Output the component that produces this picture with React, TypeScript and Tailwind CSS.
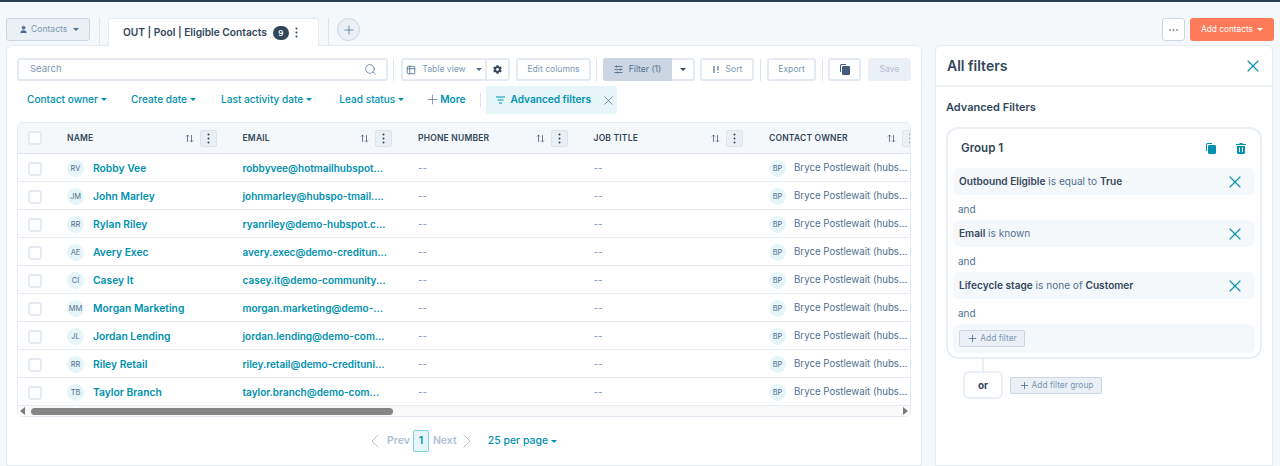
import { ChevronLeft, ChevronRight, Plus, Search, Table2, User, X } from 'lucide-react'
import { FaCog } from 'react-icons/fa'

// Contacts shown in the table
const CONTACTS = [
  { initials: 'RV', name: 'Robby Vee', email: 'robbyvee@hotmailhubspot...' },
  { initials: 'JM', name: 'John Marley', email: 'johnmarley@hubspo-tmail....' },
  { initials: 'RR', name: 'Rylan Riley', email: 'ryanriley@demo-hubspot.c...' },
  { initials: 'AE', name: 'Avery Exec', email: 'avery.exec@demo-creditun...' },
  { initials: 'CI', name: 'Casey It', email: 'casey.it@demo-community...' },
  { initials: 'MM', name: 'Morgan Marketing', email: 'morgan.marketing@demo-...' },
  { initials: 'JL', name: 'Jordan Lending', email: 'jordan.lending@demo-com...' },
  { initials: 'RR', name: 'Riley Retail', email: 'riley.retail@demo-credituni...' },
  { initials: 'TB', name: 'Taylor Branch', email: 'taylor.branch@demo-com...' }
]

const COLUMNS = ['NAME', 'EMAIL', 'PHONE NUMBER', 'JOB TITLE', 'CONTACT OWNER']

function Caret({ className = 'border-t-[#0091ae]' }: { className?: string }) {
  return <span className={`inline-block w-0 h-0 border-x-[3px] border-x-transparent border-t-[3px] ${className}`} />
}

function Separator({ className = 'h-[22px]' }: { className?: string }) {
  return <div className={`w-px bg-[#dfe3eb] shrink-0 ${className}`} />
}

function ToolButton({ children, className = '' }: { children: React.ReactNode; className?: string }) {
  return (
    <div className={`h-[23px] flex items-center justify-center gap-1.5 bg-white border-2 border-[#e5ebf2] rounded-[3px] text-[8.6px] text-[#7c98b6] shrink-0 ${className}`}>
      {children}
    </div>
  )
}

function SortArrows() {
  return (
    <svg width="9" height="9" viewBox="0 0 9 9" className="text-[#516f90]" fill="none" stroke="currentColor" strokeWidth="0.9">
      <path d="M2.5 8V1M1 2.5L2.5 1L4 2.5" />
      <path d="M6.5 1v7M5 6.5L6.5 8L8 6.5" />
    </svg>
  )
}

function Dots({ className = 'text-[#33475b]' }: { className?: string }) {
  return (
    <svg width="3" height="11" viewBox="0 0 3 11" fill="currentColor" className={className}>
      <circle cx="1.5" cy="1.5" r="1" />
      <circle cx="1.5" cy="5.5" r="1" />
      <circle cx="1.5" cy="9.5" r="1" />
    </svg>
  )
}

function Checkbox() {
  return <div className="w-[14px] h-[14px] bg-white border-2 border-[#e5ebf2] rounded-[3px] shrink-0" />
}

function Avatar({ initials }: { initials: string }) {
  return (
    <div className="w-[17px] h-[17px] rounded-full bg-[#e5f5f8] flex items-center justify-center text-[7.5px] font-normal text-[#516f90] shrink-0">
      {initials}
    </div>
  )
}

function CopyIcon({ className }: { className: string }) {
  return (
    <svg width="10" height="11" viewBox="0 0 10 11" fill="currentColor" className={className}>
      <path d="M0 1.5A1.5 1.5 0 0 1 1.5 0H6v1H1.5a.5.5 0 0 0-.5.5V8H0V1.5z" />
      <rect x="2" y="2" width="8" height="9" rx="1.2" />
    </svg>
  )
}

function TrashIcon() {
  return (
    <svg width="10" height="11" viewBox="0 0 10 11" fill="currentColor">
      <path d="M3.5 0h3v1H10v1H0V1h3.5V0z" />
      <path fillRule="evenodd" d="M1 3h8v6.5A1.5 1.5 0 0 1 7.500 11h-5A1.500 1.500 0 0 1 1 9.500V3zm2 1.500v4.500h1V4.500H3zm3 0v4.500h1V4.500H6z" />
    </svg>
  )
}

function FilterRule({ children }: { children: React.ReactNode }) {
  return (
    <div className="h-[27px] flex items-center justify-between bg-[#f5f8fa] rounded-md pl-[6px] pr-[10px] text-[10.1px] text-[#516f90]">
      <span>{children}</span>
      <X className="w-[20px] h-[20px] text-[#0091ae]" strokeWidth={1.3} />
    </div>
  )
}

function AndLabel() {
  return <div className="h-[25px] pt-[4px] flex items-center pl-[5px] text-[10px] text-[#516f90]">and</div>
}

function AddButton({ label }: { label: string }) {
  return (
    <div className="h-[17px] flex items-center justify-center gap-[2px] bg-[#eaf0f6] border border-[#cbd6e2] rounded-[2px] text-[8.4px] text-[#7c98b6]">
      <Plus className="w-[11px] h-[11px] text-[#516f90]" strokeWidth={1.8} />
      {label}
    </div>
  )
}

export default function App() {
  return (
    <div className="w-[1280px] h-[466px] overflow-hidden bg-[#f5f8fa] font-['Inter',sans-serif] text-[#33475b] border-t-2 border-[#2d3e50]">
      {/* Tab row */}
      <div className="h-[44px] pt-4 flex">
        <div className="ml-[6px] w-[84px] h-[23px] flex items-center pl-[12px] bg-[#eaf0f6] border border-[#cbd6e2] rounded-[3px] text-[8.6px] text-[#7c98b6]">
          <User className="w-[9px] h-[9px] text-[#516f90] fill-[#516f90]" />
          <span className="ml-[3px]">Contacts</span>
          <Caret className="ml-[6px] border-t-[#516f90]" />
        </div>
        <Separator className="ml-[9px] h-[28px]" />
        <div className="ml-[8px] w-[211px] h-[28px] flex items-center pl-[14px] bg-white border border-[#e5ebf2] border-b-0 rounded-t-[3px] relative z-10">
          <span className="text-[10.2px] font-semibold whitespace-nowrap">OUT | Pool | Eligible Contacts</span>
          <span className="ml-[6px] w-4 h-[14px] rounded-full bg-[#33475b] text-white text-[8px] font-semibold flex items-center justify-center">9</span>
          <Dots className="ml-[6px] text-[#33475b]" />
        </div>
        <Separator className="ml-[9px] h-[28px]" />
        <div className="ml-[8px] w-[23px] h-[23px] rounded-full bg-[#eaf0f6] border border-[#cbd6e2] flex items-center justify-center">
          <Plus className="w-[14px] h-[14px] text-[#516f90]" strokeWidth={1.3} />
        </div>
        <div className="ml-auto w-[23px] h-[23px] bg-white border border-[#cbd6e2] rounded-[3px] flex items-center justify-center">
          <svg width="9" height="2" viewBox="0 0 9 2" fill="#33475b">
            <circle cx="1" cy="1" r="0.8" />
            <circle cx="4.5" cy="1" r="0.8" />
            <circle cx="8" cy="1" r="0.8" />
          </svg>
        </div>
        <div className="ml-[5px] mr-[6px] w-[84px] h-[23px] flex items-center justify-center gap-1 bg-[#ff7a59] rounded-[3px] text-[8.3px] text-white">
          Add contacts
          <Caret className="border-t-white" />
        </div>
      </div>

      <div className="flex gap-[13px] pl-[6px] pr-[6px] h-[420px]">
        {/* Main panel */}
        <div className="w-[916px] -mt-px bg-white border border-[#e5ebf2] rounded-t-md pl-[10px] pr-[10px] pt-[12px]">
          {/* Toolbar */}
          <div className="flex items-center">
            <div className="w-[371px] h-[23px] flex items-center justify-between bg-white border-2 border-[#e5ebf2] rounded-[3px] pl-[11px] pr-[9px] text-[9.5px] text-[#7c98b6] shrink-0">
              Search
              <Search className="w-[13px] h-[13px] text-[#516f90]" strokeWidth={1.3} />
            </div>
            <Separator className="ml-[5px] h-[22px]" />
            <div className="ml-[7px] w-[109px] h-[23px] flex bg-white border-2 border-[#e5ebf2] rounded-[3px] text-[8.6px] text-[#7c98b6] shrink-0">
              <div className="flex-1 flex items-center justify-center gap-1.5 border-r-2 border-[#e5ebf2]">
                <Table2 className="w-[10px] h-[10px] text-[#516f90]" />
                Table view
                <Caret className="ml-1 border-t-[#516f90]" />
              </div>
              <div className="w-[21px] flex items-center justify-center">
                <FaCog className="w-[9px] h-[9px] text-[#33475b]" />
              </div>
            </div>
            <ToolButton className="ml-[6px] w-[75px]">Edit columns</ToolButton>
            <Separator className="ml-[5px] h-[22px]" />
            <div className="ml-[6px] w-[92px] h-[23px] flex bg-white border-2 border-[#e5ebf2] rounded-[3px] text-[8.6px] shrink-0">
              <div className="w-[69px] -m-[2px] mr-0 bg-[#cbd6e2] flex items-center justify-center gap-1.5 text-[#516f90] rounded-l-[3px]">
                <svg width="9" height="9" viewBox="0 0 9 9" stroke="currentColor" fill="none" strokeWidth="0.9">
                  <path d="M0.500 1.500h8M0.500 4.500h8M0.500 7.500h8M2.500 0.500v2M6.500 3.500v2M3.500 6.500v2" />
                </svg>
                Filter (1)
              </div>
              <div className="flex-1 flex items-center justify-center"><Caret className="border-t-[#33475b]" /></div>
            </div>
            <ToolButton className="ml-[5px] w-[54px]">
              <svg width="8" height="9" viewBox="0 0 8 9" fill="none" stroke="#516f90" strokeWidth="1.2">
                <path d="M2 8V1M6 1v4.500M6 7v1" />
              </svg>
              Sort
            </ToolButton>
            <Separator className="ml-[6px] h-[22px]" />
            <ToolButton className="ml-[6px] w-[49px]">Export</ToolButton>
            <Separator className="ml-[6px] h-[22px]" />
            <ToolButton className="ml-[5px] w-[33px]"><CopyIcon className="text-[#425b76]" /></ToolButton>
            <div className="ml-[7px] w-[43px] h-[23px] flex items-center justify-center bg-[#eaf0f6] rounded-[3px] text-[8.6px] text-[#b0c1d4] shrink-0">Save</div>
          </div>

          {/* Quick filters */}
          <div className="mt-[5px] h-[28px] flex items-center text-[10.1px] font-medium text-[#0091ae] whitespace-nowrap">
            <span className="ml-[10px] flex items-center gap-[3px]">Contact owner <Caret /></span>
            <span className="ml-[24px] flex items-center gap-[3px]">Create date <Caret /></span>
            <span className="ml-[25px] flex items-center gap-[3px]">Last activity date <Caret /></span>
            <span className="ml-[27px] flex items-center gap-[3px]">Lead status <Caret /></span>
            <span className="ml-[21px] flex items-center gap-0 font-semibold">
              <Plus className="w-[15px] h-[15px] text-[#516f90]" strokeWidth={1.1} />
              More
            </span>
            <Separator className="ml-[14px] h-[14px]" />
            <div className="ml-[5px] w-[131px] h-[28px] flex items-center bg-[#e5f5f8] rounded-[2px] pl-[10px] pr-[1px] font-semibold">
              <svg width="9" height="8" viewBox="0 0 9 8" stroke="currentColor" fill="none" strokeWidth="1">
                <path d="M0 1h9M1.500 4h6M3 7h3" />
              </svg>
              <span className="ml-[6px]">Advanced filters</span>
              <X className="ml-auto w-[15px] h-[15px] text-[#516f90]" strokeWidth={1.2} />
            </div>
          </div>

          {/* Table */}
          <div className="mt-[8px] h-[295px] border border-[#e5ebf2] rounded-md overflow-hidden flex flex-col">
            <div className="h-[31px] flex items-center bg-[#f5f8fa] border-b border-[#dfe3eb] shrink-0">
              <div className="w-[37px] pl-[10px] shrink-0"><Checkbox /></div>
              {COLUMNS.map((col) => (
                <div key={col} className="w-[175.5px] pl-[12px] pr-[14px] flex items-center shrink-0">
                  <span className="text-[8.5px] font-semibold tracking-[0.2px] text-[#33475b] whitespace-nowrap">{col}</span>
                  <span className="ml-auto"><SortArrows /></span>
                  <span className="ml-[6px] w-[17px] h-[17px] bg-[#eaf0f6] border border-[#dfe3eb] rounded-[2px] flex items-center justify-center"><Dots /></span>
                </div>
              ))}
            </div>
            {CONTACTS.map((c) => (
              <div key={c.name} className="h-[28px] pt-[2px] flex items-center border-b border-[#e5ebf2] shrink-0 text-[10px]">
                <div className="w-[37px] pl-[10px] shrink-0"><Checkbox /></div>
                <div className="w-[175.5px] pl-[12px] flex items-center gap-[9px] shrink-0 text-[10.3px] font-semibold text-[#0091ae]">
                  <Avatar initials={c.initials} />
                  {c.name}
                </div>
                <div className="w-[175.5px] pl-[12px] shrink-0 font-semibold text-[#0091ae] whitespace-nowrap">{c.email}</div>
                <div className="w-[175.5px] pl-[12px] shrink-0 text-[#7c98b6]">--</div>
                <div className="w-[175.5px] pl-[12px] shrink-0 text-[#7c98b6]">--</div>
                <div className="pl-[12px] flex items-center gap-[8px] text-[9.7px] text-[#516f90] whitespace-nowrap">
                  <Avatar initials="BP" />
                  Bryce Postlewait (hubs...
                </div>
              </div>
            ))}
            <div className="flex-1 flex items-center bg-[#fafafa]">
              <span className="ml-[2px] w-0 h-0 border-y-[4px] border-y-transparent border-r-[5px] border-r-[#7a7a7a]" />
              <div className="ml-[6px] w-[362px] h-[7px] rounded-full bg-[#858585]" />
              <span className="ml-auto mr-[2px] w-0 h-0 border-y-[4px] border-y-transparent border-l-[5px] border-l-[#7a7a7a]" />
            </div>
          </div>

          {/* Pagination */}
          <div className="mt-[13px] h-[22px] flex items-center pl-[346px] text-[10.5px] font-semibold text-[#b0c1d4] whitespace-nowrap">
            <ChevronLeft className="w-[24px] h-[24px]" strokeWidth={1} />
            <span>Prev</span>
            <span className="ml-[3px] w-[16px] h-[22px] flex items-center justify-center bg-[#e5f5f8] border border-[#7fd1de] rounded-[2px] text-[#0091ae]">1</span>
            <span className="ml-[4px]">Next</span>
            <ChevronRight className="-ml-[2px] w-[24px] h-[24px]" strokeWidth={1} />
            <span className="ml-[9px] flex items-center gap-[3px] font-medium text-[#0091ae]">25 per page <Caret /></span>
          </div>
        </div>

        {/* Filter panel */}
        <div className="w-[338px] -mt-px bg-white border border-[#e5ebf2] rounded-t-md">
          <div className="h-[41px] flex items-center justify-between pl-[11px] pr-[9px] border-b-2 border-[#eff2f6]">
            <span className="text-[14px] font-semibold">All filters</span>
            <X className="w-[20px] h-[20px] text-[#0091ae]" strokeWidth={1.3} />
          </div>
          <div className="pl-[10px] pr-[10px]">
            <div className="h-[40px] flex items-center text-[11px] font-semibold">Advanced Filters</div>
            <div className="h-[232px] border-2 border-[#eaf0f6] rounded-xl px-[5px]">
              <div className="h-[39px] flex items-center justify-between pl-[8px] pr-[9px]">
                <span className="text-[11.6px] font-semibold">Group 1</span>
                <span className="flex items-center gap-[20px] text-[#0091ae]">
                  <CopyIcon className="text-[#0091ae]" />
                  <TrashIcon />
                </span>
              </div>
              <FilterRule><b className="font-semibold text-[#33475b]">Outbound Eligible</b> is equal to <b className="font-semibold text-[#33475b]">True</b></FilterRule>
              <AndLabel />
              <FilterRule><b className="font-semibold text-[#33475b]">Email</b> is known</FilterRule>
              <AndLabel />
              <FilterRule><b className="font-semibold text-[#33475b]">Lifecycle stage</b> is none of <b className="font-semibold text-[#33475b]">Customer</b></FilterRule>
              <AndLabel />
              <div className="h-[29px] flex items-center bg-[#f5f8fa] rounded-md pl-[6px]">
                <div className="w-[66px]"><AddButton label="Add filter" /></div>
              </div>
            </div>
            <div className="ml-[36px] w-[2px] h-[12px] bg-[#eaf0f6]" />
            <div className="ml-[17px] flex items-center gap-[7px]">
              <div className="w-[40px] h-[28px] border-2 border-[#eaf0f6] rounded-md flex items-center justify-center text-[10px] font-bold">or</div>
              <div className="w-[92px]"><AddButton label="Add filter group" /></div>
            </div>
          </div>
        </div>
      </div>
    </div>
  )
}
